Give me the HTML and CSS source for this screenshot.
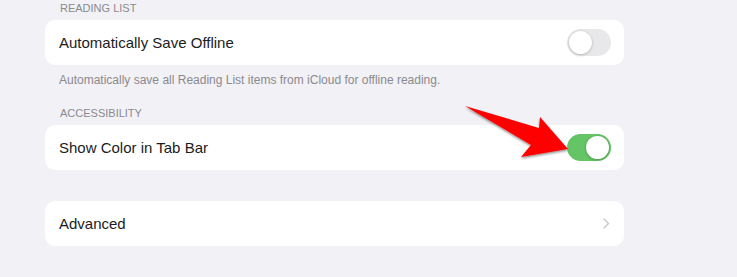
FILE: index.html
```html
<!DOCTYPE html>
<html>
<head>
<meta charset="utf-8">
<link rel="stylesheet" href="styles.css">
</head>
<body>
<div class="page">
  <div class="group-header first">READING LIST</div>
  <div class="card">
    <div class="row">
      <span class="label">Automatically Save Offline</span>
      <span class="toggle"><span class="knob"></span></span>
    </div>
  </div>
  <div class="group-footer">Automatically save all Reading List items from iCloud for offline reading.</div>

  <div class="group-header">ACCESSIBILITY</div>
  <div class="card">
    <div class="row">
      <span class="label">Show Color in Tab Bar</span>
      <span class="toggle on"><span class="knob"></span></span>
    </div>
  </div>

  <div class="card spaced">
    <div class="row">
      <span class="label">Advanced</span>
      <svg class="chevron" width="7" height="11" viewBox="0 0 7 11"><path d="M1 1 L5.5 5.5 L1 10" fill="none" stroke="#c5c5c8" stroke-width="1.4" stroke-linecap="round" stroke-linejoin="round"/></svg>
    </div>
  </div>
</div>
<svg class="arrow" width="737" height="277" viewBox="0 0 737 277">
  <defs>
    <filter id="sh" x="-20%" y="-20%" width="140%" height="140%">
      <feDropShadow dx="0" dy="1.5" stdDeviation="1.2" flood-color="#000" flood-opacity="0.45"/>
    </filter>
  </defs>
  <polygon points="465,106 539,128 540,117 568,149 521,157 531,145" fill="#ff0000" filter="url(#sh)"/>
</svg>
</body>
</html>
```
FILE: styles.css
```css
html, body {
  margin: 0;
  padding: 0;
}
body {
  background: #f2f1f6;
  font-family: "Liberation Sans", Arial, sans-serif;
  width: 737px;
  height: 277px;
  overflow: hidden;
  position: relative;
}
.page {
  width: 579px;
  margin-left: 45px;
}
.group-header {
  font-size: 11px;
  line-height: 14px;
  color: #8a8a8e;
  padding: 0 15px 5px;
  margin-top: 19px;
}
.group-header.first {
  margin-top: 0;
  padding-top: 1px;
}
.card {
  background: #ffffff;
  border-radius: 10px;
}
.card.spaced {
  margin-top: 31px;
}
.row {
  height: 45px;
  display: flex;
  align-items: center;
  justify-content: space-between;
  padding: 0 14px;
}
.label {
  font-size: 15px;
  color: #1c1c1e;
}
.group-footer {
  font-size: 12px;
  line-height: 14px;
  color: #8a8a8e;
  padding: 8px 14px 0;
}
.toggle {
  width: 44px;
  height: 27px;
  border-radius: 14px;
  background: #e8e8ea;
  position: relative;
  margin-right: -1px;
}
.toggle .knob {
  position: absolute;
  top: 2px;
  left: 2px;
  width: 23px;
  height: 23px;
  border-radius: 50%;
  background: #ffffff;
  box-shadow: 0 1px 3px rgba(0,0,0,0.2), 0 0 0 0.5px rgba(0,0,0,0.06);
}
.toggle.on {
  background: #65c466;
}
.toggle.on .knob {
  left: 19px;
}
.arrow {
  position: absolute;
  left: 0;
  top: 0;
  pointer-events: none;
}
```
